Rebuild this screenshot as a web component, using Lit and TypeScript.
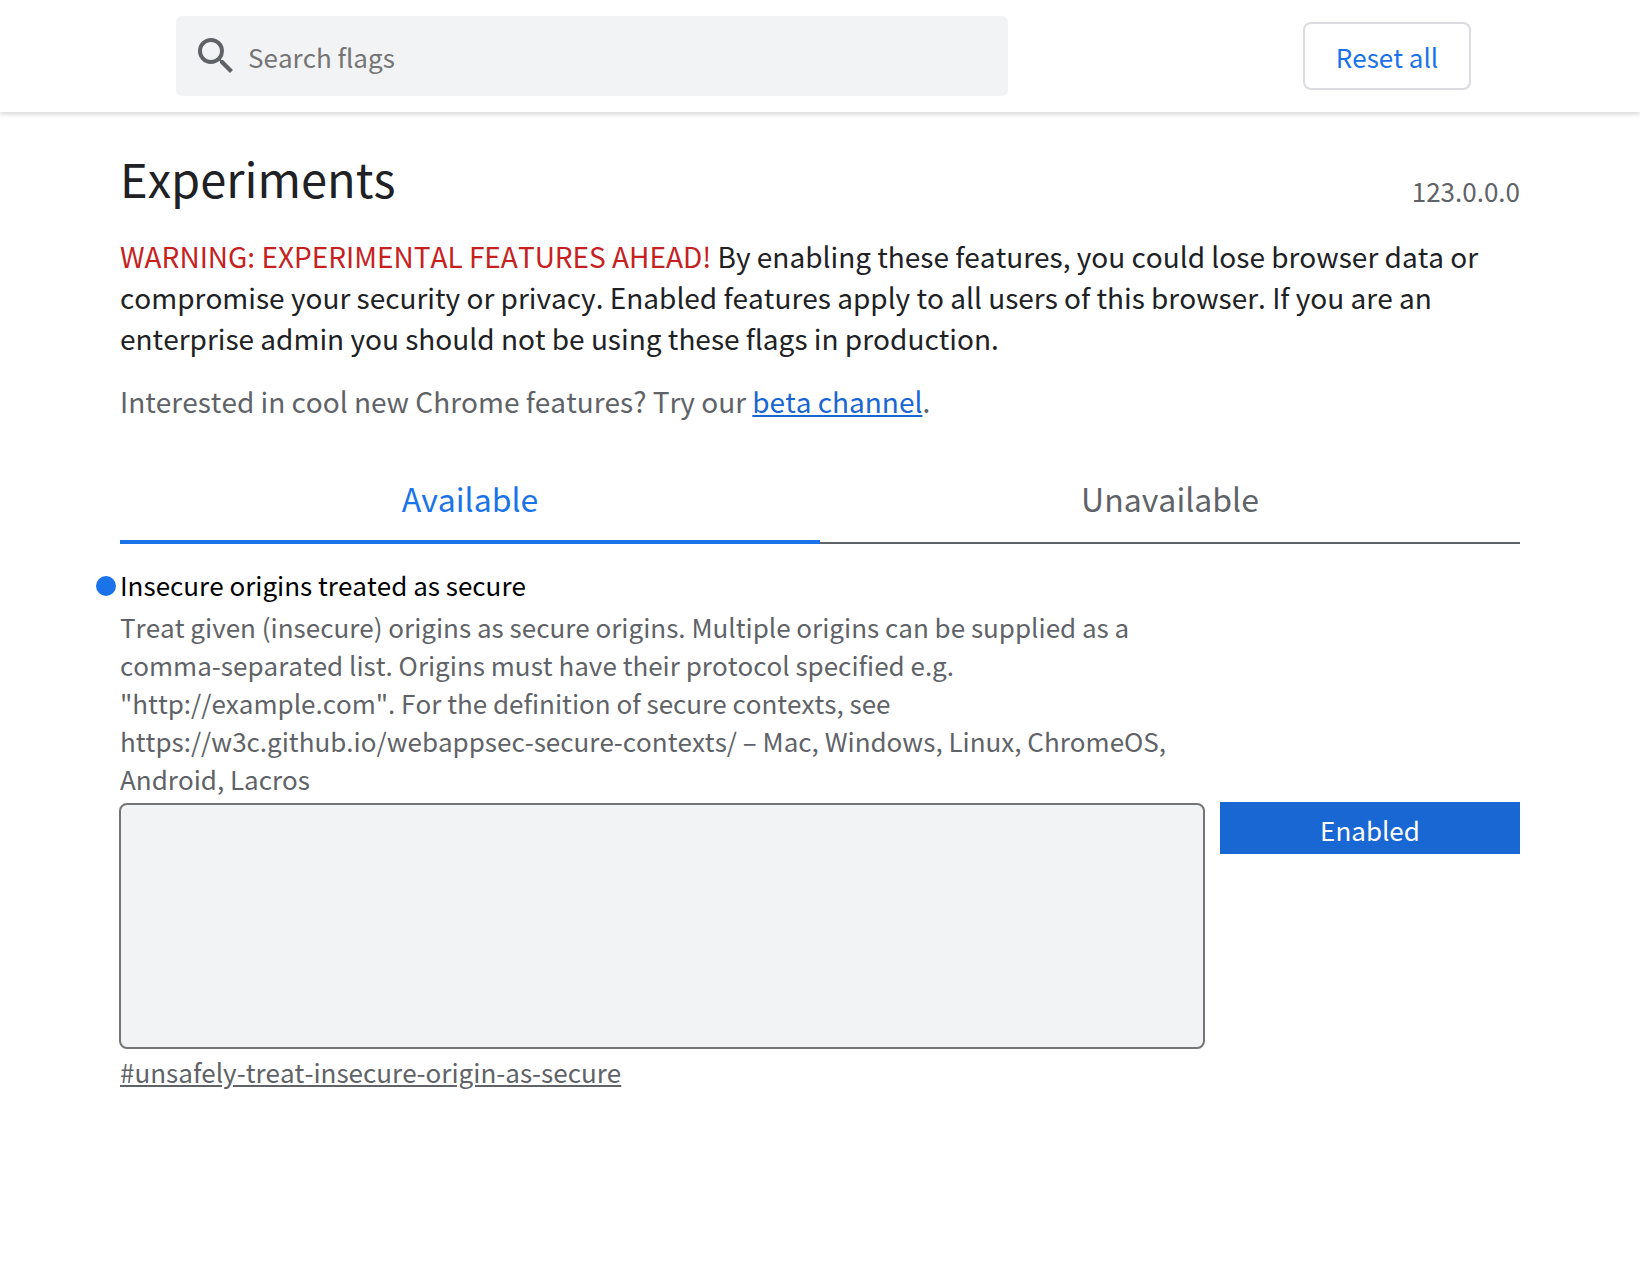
import { LitElement, html, css } from "lit";
import { customElement, state } from "lit/decorators.js";

@customElement("app-root")
export class AppRoot extends LitElement {
  @state() private tab = "available";

  static styles = css`
    :host {
      display: block;
      background: #fff;
      color: #202124;
      font-family: "Noto Sans CJK SC", "Noto Sans", sans-serif;
      font-size: 26px;
      font-kerning: none;
    }
    * {
      box-sizing: border-box;
    }
    button,
    input,
    select,
    textarea {
      font: inherit;
      font-kerning: none;
      margin: 0;
    }
    .toolbar {
      display: flex;
      align-items: center;
      justify-content: space-between;
      height: 112px;
      padding: 0 169px 0 176px;
      box-shadow: 0 3px 4px rgba(0, 0, 0, 0.13);
    }
    .search {
      display: flex;
      align-items: center;
      width: 832px;
      height: 80px;
      padding: 0 16px;
      gap: 8px;
      border-radius: 6px;
      background: #f1f3f4;
    }
    .search svg {
      flex: none;
      width: 48px;
      height: 48px;
      fill: #5f6368;
    }
    .search input {
      flex: 1;
      min-width: 0;
      padding: 1px 0 0;
      border: 0;
      outline: 0;
      background: none;
      color: inherit;
    }
    .search input::placeholder {
      color: #757575;
      opacity: 1;
    }
    .reset {
      width: 168px;
      height: 68px;
      padding: 1px 0 0;
      border: 2px solid #dadce0;
      border-radius: 8px;
      background: #fff;
      color: #1a73e8;
    }
    .page {
      padding: 30px 120px;
    }
    .title-row {
      display: flex;
      align-items: flex-end;
      justify-content: space-between;
    }
    h1 {
      margin: 0;
      font-size: 47px;
      font-weight: 400;
      line-height: 72px;
    }
    .version {
      line-height: 46px;
      color: #5f6368;
    }
    .blurb {
      margin: 22px 0 0;
      font-size: 28px;
      line-height: 41px;
    }
    .warning {
      color: #c5221f;
    }
    .promo {
      margin: 22px 0 0;
      font-size: 28px;
      line-height: 41px;
      color: #5f6368;
    }
    .promo a {
      color: #1967d2;
    }
    .tabs {
      display: flex;
      margin-top: 40px;
    }
    .tab {
      flex: 1;
      height: 82px;
      padding: 0 0 8px;
      border: 0;
      border-bottom: 2px solid #5f6368;
      background: none;
      color: #5f6368;
      font-size: 32px;
    }
    .tab[aria-selected="true"] {
      border-bottom-color: #1a73e8;
      box-shadow: inset 0 -2px #1a73e8;
      color: #1a73e8;
    }
    .flag {
      display: grid;
      grid-template-columns: minmax(0, 1fr) 300px;
      gap: 4px 16px;
      padding-top: 22px;
    }
    h2 {
      position: relative;
      margin: 0;
      font-size: 26px;
      font-weight: 400;
      line-height: 38px;
      color: #000;
    }
    h2::before {
      content: "";
      position: absolute;
      top: 10px;
      left: -24px;
      width: 20px;
      height: 20px;
      border-radius: 50%;
      background: #1a73e8;
    }
    .description {
      margin: 4px 0 0;
      line-height: 38px;
      color: #5f6368;
    }
    .origins {
      display: block;
      width: calc(100% + 2px);
      height: 246px;
      margin: 1px -1px 0;
      border: 2px solid #757575;
      border-radius: 8px;
      background: #f1f3f4;
      resize: none;
    }
    .permalink {
      display: inline-block;
      line-height: 38px;
      margin-top: 4px;
      color: #5f6368;
    }
    .choice {
      align-self: start;
      height: 52px;
      padding: 2px 0 0;
      border: 0;
      border-radius: 0;
      appearance: none;
      background: #1967d2;
      color: #fff;
      text-align: center;
      text-align-last: center;
    }
    .text,
    .value {
      grid-column: 1;
    }
  `;

  render() {
    return html`
      <header class="toolbar">
        <label class="search">
          <svg viewBox="0 0 24 24" aria-hidden="true">
            <path
              d="M15.5 14h-.79l-.28-.27A6.471 6.471 0 0 0 16 9.5 6.5 6.5 0 1 0 9.5 16c1.61 0 3.09-.59 4.23-1.57l.27.28v.79l5 4.99L20.49 19l-4.99-5zm-6 0C7.01 14 5 11.99 5 9.5S7.01 5 9.5 5 14 7.01 14 9.5 11.99 14 9.5 14z"
            />
          </svg>
          <input type="text" placeholder="Search flags" aria-label="Search flags" />
        </label>
        <button class="reset" type="button">Reset all</button>
      </header>
      <main class="page">
        <div class="title-row">
          <h1>Experiments</h1>
          <span class="version">123.0.0.0</span>
        </div>
        <p class="blurb">
          <span class="warning">WARNING: EXPERIMENTAL FEATURES AHEAD!</span>
          By enabling these features, you could lose browser data or compromise your security or
          privacy. Enabled features apply to all users of this browser. If you are an enterprise
          admin you should not be using these flags in production.
        </p>
        <p class="promo">
          Interested in cool new Chrome features? Try our <a href="#beta">beta channel</a>.
        </p>
        <div class="tabs" role="tablist">
          ${[
            ["available", "Available"],
            ["unavailable", "Unavailable"],
          ].map(
            ([id, label]) => html`<button
              class="tab"
              type="button"
              role="tab"
              aria-selected=${this.tab === id ? "true" : "false"}
              @click=${() => (this.tab = id)}
            >${label}</button>`
          )}
        </div>
        <section class="flag">
          <div class="text">
            <h2 id="flag-name">Insecure origins treated as secure</h2>
            <p class="description">
              Treat given (insecure) origins as secure origins. Multiple origins can be supplied as
              a comma-separated list. Origins must have their protocol specified e.g.
              "http://example.com". For the definition of secure contexts, see
              https://w3c.github.io/webappsec-secure-contexts/ – Mac, Windows, Linux, ChromeOS,
              Android, Lacros
            </p>
          </div>
          <div class="value">
            <textarea class="origins" aria-labelledby="flag-name"></textarea>
            <a class="permalink" href="#unsafely-treat-insecure-origin-as-secure"
              >#unsafely-treat-insecure-origin-as-secure</a
            >
          </div>
          <select class="choice" aria-labelledby="flag-name">
            <option>Enabled</option>
            <option>Disabled</option>
          </select>
        </section>
      </main>
    `;
  }
}
